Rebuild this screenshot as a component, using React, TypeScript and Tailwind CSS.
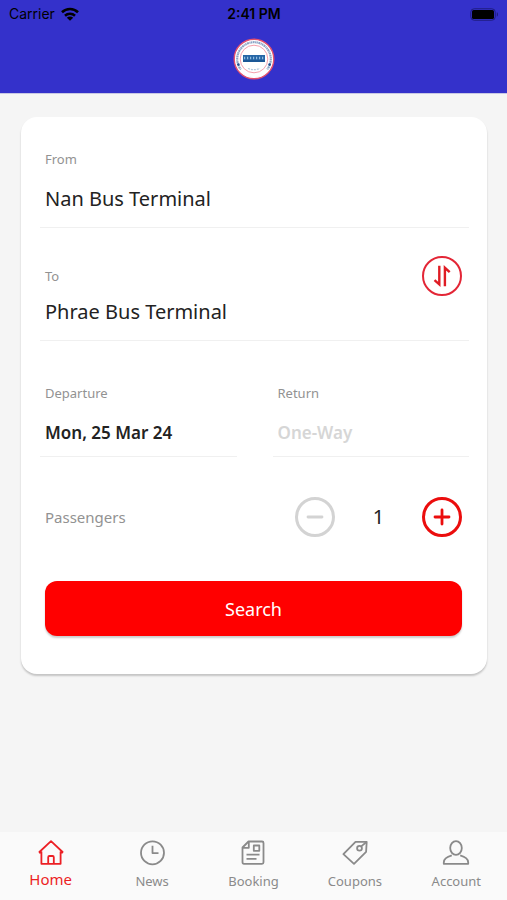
import { useState } from 'react';
import type { ReactNode } from 'react';

const LABEL = 'text-[13px] leading-5 text-[#929292]';
const FIELD = 'pl-[5px] pr-[7px] border-b border-[#f0f0f0]';

function StatusBar() {
  return (
    <div className="grid grid-cols-3 items-center h-7 pl-[9px] pr-2 text-black font-['Inter','Liberation_Sans',sans-serif]">
      <div className="flex items-center gap-1.5 text-sm">
        <span>Carrier</span>
        <svg className="w-[18px] h-[14px]" viewBox="0 0 18 14" fill="none" stroke="currentColor" strokeWidth="2.6">
          <path d="M1 5.2a11.6 11.6 0 0 1 16 0" />
          <path d="M4 8.8a7.3 7.3 0 0 1 10 0" />
          <path d="M9 13.8 5.8 10.8a4.6 4.6 0 0 1 6.4 0z" fill="currentColor" stroke="none" />
        </svg>
      </div>
      <p className="text-center text-sm font-semibold">2:41 PM</p>
      <svg className="w-[29px] h-[13px] justify-self-end" viewBox="0 0 29 13">
        <rect x="0.75" y="0.75" width="24.5" height="11.5" rx="3.5" fill="none" stroke="#1f1d80" />
        <rect x="2" y="2" width="22" height="9" rx="1.6" />
        <path d="M26.8 4.3c1.6.6 1.6 3.8 0 4.4z" fill="#1f1d80" />
      </svg>
    </div>
  );
}

function Logo() {
  return (
    <svg className="w-[42px] h-[42px]" viewBox="0 0 42 42">
      <circle cx="21" cy="21" r="19.8" fill="#fff" stroke="#e2506e" strokeWidth="1.4" />
      <circle cx="21" cy="21" r="16.8" fill="none" stroke="#6f8fb8" strokeWidth="2.2" strokeDasharray="1.4 0.5 2 0.5 1 0.4" opacity="0.8" />
      <path d="M8 31.4a16.8 16.8 0 0 0 26 0" fill="none" stroke="#fff" strokeWidth="3.4" />
      <circle cx="21" cy="21" r="13.8" fill="#fff" stroke="#f4a0ad" />
      <circle cx="5.4" cy="26.6" r="1.3" fill="#1f5290" />
      <circle cx="36.6" cy="26.6" r="1.3" fill="#1f5290" />
      <rect x="10" y="17" width="22" height="7" fill="#2666a6" />
      <path d="M11 20h20" stroke="#8fbbe0" strokeWidth="2.4" strokeDasharray="1.2 1.8" />
      <path d="M10 23h22" stroke="#174f8c" strokeWidth="1.2" />
      <path d="M15 30.5q6 2.4 12 0" fill="none" stroke="#b5c9dd" strokeWidth="1.2" strokeDasharray="2 1" />
    </svg>
  );
}

interface StepButtonProps {
  label: string;
  path: string;
  disabled?: boolean;
  onClick: () => void;
}

function StepButton({ label, path, disabled, onClick }: StepButtonProps) {
  return (
    <button
      type="button"
      aria-label={label}
      disabled={disabled}
      onClick={onClick}
      className="w-10 h-10 rounded-full border-[3px] border-current flex items-center justify-center text-[#eb0d0d] disabled:text-[#d3d3d3]"
    >
      <svg className="w-5 h-5" viewBox="0 0 20 20" fill="none" stroke="currentColor" strokeWidth="2.8" strokeLinecap="round">
        <path d={path} />
      </svg>
    </button>
  );
}

const tabs: { name: string; icon: ReactNode }[] = [
  {
    name: 'Home',
    icon: (
      <>
        <path d="M4.4 12.4 3 13.8 2.4 13 14 2.2 25.6 13l-.6.8-1.4-1.4" />
        <path d="M4.4 12.4v12.4h19.2V12.4" />
        <path d="M11.2 24.5v-6.3q0-1.2 1.2-1.2h3.2q1.2 0 1.2 1.2v6.3" />
      </>
    ),
  },
  {
    name: 'News',
    icon: (
      <>
        <circle cx="14.5" cy="13.8" r="11.5" />
        <path d="M14.5 6.8v7.3h6" />
      </>
    ),
  },
  {
    name: 'Booking',
    icon: (
      <>
        <path d="M9.5 2.5H23q1.5 0 1.5 1.5v19.3q0 1.5-1.5 1.5H5q-1.5 0-1.5-1.5V8.5z" />
        <path d="M9.8 2.8v6H3.8" />
        <path d="M14.8 6.5h5.5v5.3h-5.5zM7.5 15.6h13M7.5 19.8h10" />
      </>
    ),
  },
  {
    name: 'Coupons',
    icon: (
      <>
        <path d="M2.4 15.2 14.5 2.8h11.2l-.6 10L13 24.8z" />
        <circle cx="18.5" cy="9.2" r="2.4" />
        <path d="m20.2 7.4 5.3-4.4" />
      </>
    ),
  },
  {
    name: 'Account',
    icon: (
      <>
        <ellipse cx="14" cy="9" rx="5.8" ry="6.9" />
        <path d="M9.8 16.4C5.4 17.6 1.8 19.8 1.8 23.4v1.4h24.4v-1.4c0-3.6-3.6-5.8-8-7" />
      </>
    ),
  },
];

export default function App() {
  const [from, setFrom] = useState('Nan Bus Terminal');
  const [to, setTo] = useState('Phrae Bus Terminal');
  const [departure, setDeparture] = useState('Mon, 25 Mar 24');
  const [returnDate, setReturnDate] = useState('');
  const [passengers, setPassengers] = useState(1);
  const [activeTab, setActiveTab] = useState('Home');

  const handleSwap = () => {
    setFrom(to);
    setTo(from);
  };

  return (
    <div className="min-h-screen flex flex-col bg-[#f5f5f5] font-['Noto_Sans',sans-serif] text-[#222]">
      <header className="bg-[#3431cb] border-b border-[#c8c8e4]">
        <StatusBar />
        <div className="flex justify-center pt-2.5 pb-[13px]">
          <Logo />
        </div>
      </header>

      <main className="flex-1 pl-[21px] pr-5 pt-[23px]">
        <form
          onSubmit={(e) => e.preventDefault()}
          className="bg-white rounded-2xl pl-[19px] pr-[18px] pt-8 pb-[38px] shadow-[0_2px_2px_rgba(0,0,0,0.2)]"
        >
          {/* Route */}
          <div className={`pb-3.5 ${FIELD}`}>
            <label htmlFor="from" className={`block ${LABEL}`}>From</label>
            <input
              id="from"
              value={from}
              onChange={(e) => setFrom(e.target.value)}
              className="block w-full mt-4 h-7 text-xl outline-none"
            />
          </div>
          <div className={`pt-7 pb-3.5 ${FIELD}`}>
            <div className="flex items-center justify-between">
              <label htmlFor="to" className={LABEL}>To</label>
              <button
                type="button"
                aria-label="Swap stations"
                onClick={handleSwap}
                className="w-10 h-10 rounded-full border-2 border-[#e32636] text-[#df1c24] flex items-center justify-center"
              >
                <svg className="w-6 h-6" viewBox="0 0 24 24" fill="none" stroke="currentColor" strokeWidth="2.4">
                  <path d="M9.3 1.8v18.6l-4.8-4.2M14.9 22.2V3.8l4.8 4.4" />
                </svg>
              </button>
            </div>
            <input
              id="to"
              value={to}
              onChange={(e) => setTo(e.target.value)}
              className="block w-full mt-0.5 h-7 text-xl outline-none"
            />
          </div>

          {/* Dates */}
          <div className="grid grid-cols-2 gap-9 mt-[42px]">
            <div className={`pb-2.5 ${FIELD}`}>
              <label htmlFor="departure" className={`block ${LABEL}`}>Departure</label>
              <input
                id="departure"
                value={departure}
                onChange={(e) => setDeparture(e.target.value)}
                className="block w-full mt-[15px] h-7 text-[17px] font-semibold outline-none"
              />
            </div>
            <div className={`pb-2.5 ${FIELD}`}>
              <label htmlFor="return" className={`block ${LABEL}`}>Return</label>
              <input
                id="return"
                value={returnDate}
                placeholder="One-Way"
                onChange={(e) => setReturnDate(e.target.value)}
                className="block w-full mt-[15px] h-7 text-[17px] font-semibold outline-none placeholder:text-[#d6d6d6]"
              />
            </div>
          </div>

          {/* Passengers */}
          <div className="flex items-center justify-between pl-[5px] pr-[7px] mt-10">
            <span className="text-[15px] text-[#929292]">Passengers</span>
            <div className="flex items-center">
              <StepButton
                label="Remove passenger"
                path="M3 10h14"
                disabled={passengers <= 1}
                onClick={() => setPassengers(passengers - 1)}
              />
              <output className="w-[87px] text-center text-xl">{passengers}</output>
              <StepButton
                label="Add passenger"
                path="M3 10h14M10 3v14"
                onClick={() => setPassengers(passengers + 1)}
              />
            </div>
          </div>

          <div className="pl-[5px] pr-[7px] mt-11">
            <button
              type="submit"
              className="w-full h-[55px] rounded-xl bg-[#ff0000] text-white text-lg shadow-[0_2px_2px_rgba(0,0,0,0.2)]"
            >
              Search
            </button>
          </div>
        </form>
      </main>

      <nav className="grid grid-cols-5 h-[68px] bg-[#fafafa]">
        {tabs.map((tab) => (
          <button
            key={tab.name}
            type="button"
            onClick={() => setActiveTab(tab.name)}
            className={`flex flex-col items-center pt-[7px] ${
              activeTab === tab.name ? 'text-[#ec1f24] text-[15px] leading-6' : 'text-[#8a8a8a] text-[13px] leading-7'
            }`}
          >
            <svg className="w-7 h-7" viewBox="0 0 28 28" fill="none" stroke="currentColor" strokeWidth="1.8" strokeLinejoin="round">
              {tab.icon}
            </svg>
            {tab.name}
          </button>
        ))}
      </nav>
    </div>
  );
}
